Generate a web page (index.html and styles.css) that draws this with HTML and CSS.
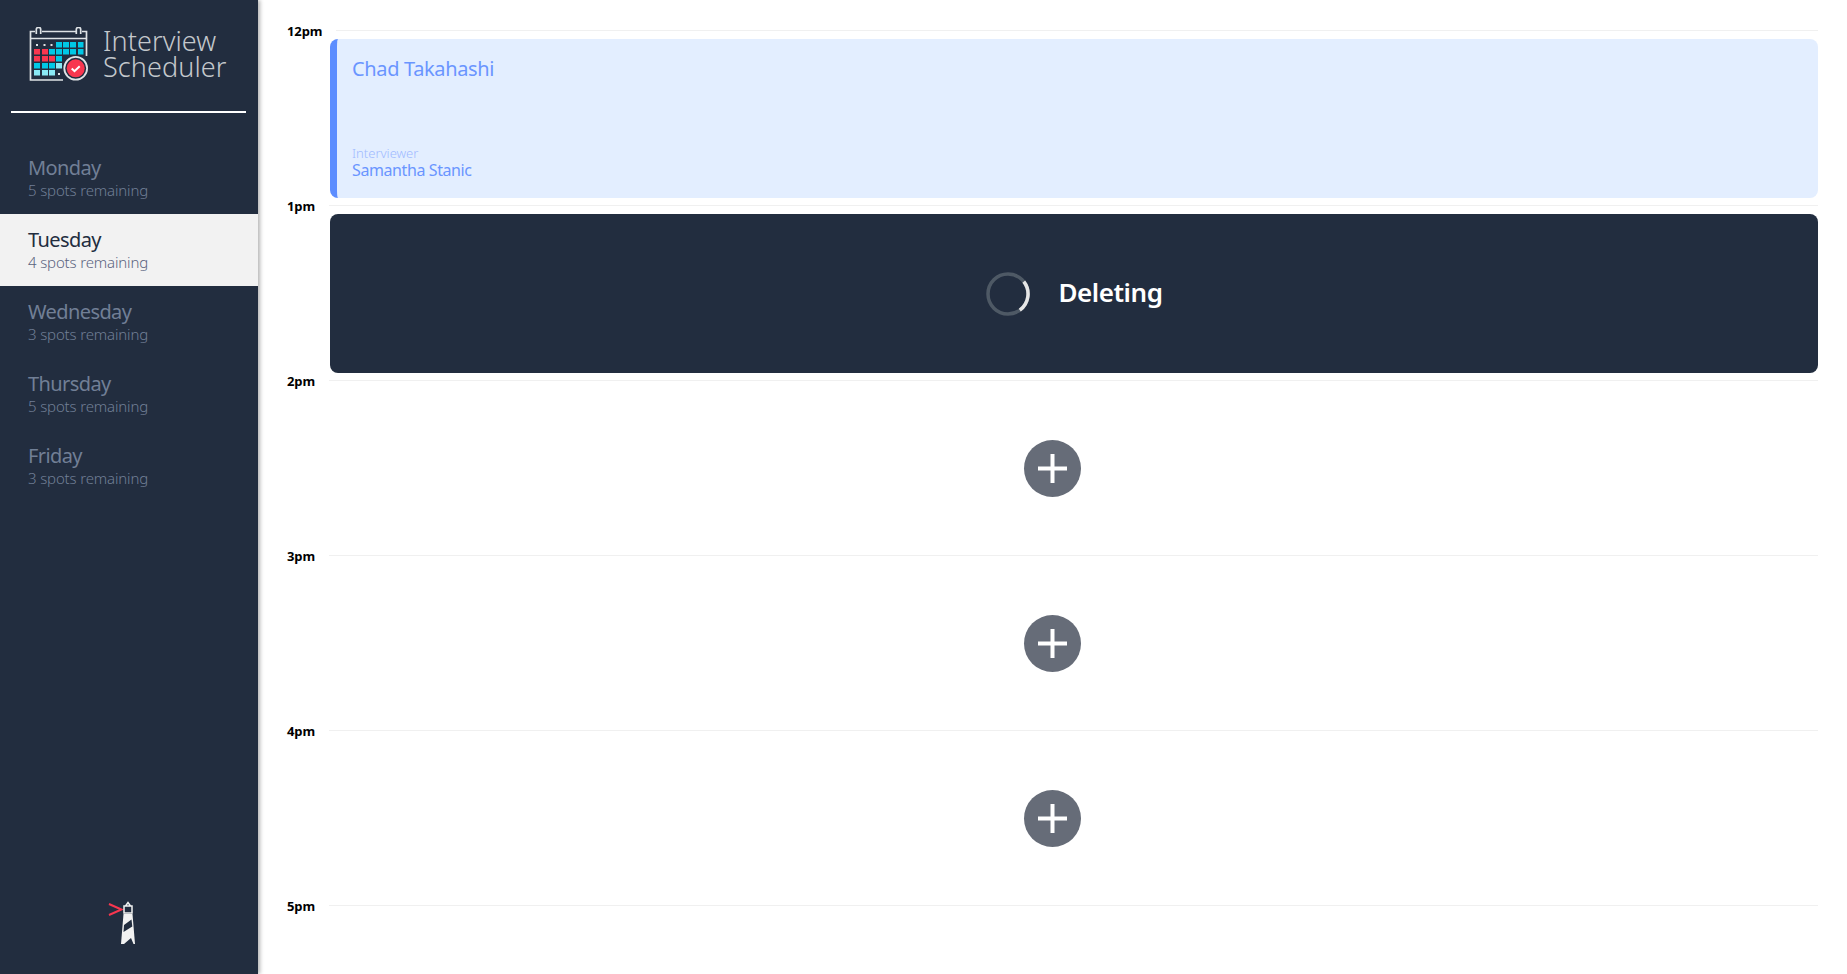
FILE: index.html
```html
<html lang="en">

<head>
    <meta charset="UTF-8">
    <meta name="viewport" content="width=device-width, initial-scale=1.0">
    <title>Interview Scheduler</title>
    <link rel="stylesheet" href="styles.css">
</head>

<body>
    <nav class="sidebar">
        <div class="brand">
            <svg class="brand-logo" viewBox="0 0 60 56" width="60" height="56">
                <g fill="none" stroke="#dfe3e6" stroke-width="1.700">
                    <path d="M7 4.500H2.500V53H35" />
                    <path d="M14 4.500H48" />
                    <path d="M54 4.500H58.500V29" />
                    <path d="M2.500 11.500H58.500" />
                    <path d="M8.300 7V2.500a2.200 2.200 0 0 1 4.400 0V7" />
                    <path d="M48.300 7V2.500a2.200 2.200 0 0 1 4.400 0V7" />
                </g>
                <g fill="#dfe3e6">
                    <rect x="8" y="17" width="2" height="2" />
                    <rect x="15.500" y="17" width="2" height="2" />
                    <rect x="22.500" y="17" width="2" height="2" />
                    <rect x="30" y="46" width="2" height="2" />
                </g>
                <g fill="#00c8e6">
                    <rect x="28" y="15" width="6" height="5.500" />
                    <rect x="35" y="15" width="6" height="5.500" />
                    <rect x="42" y="15" width="6" height="5.500" />
                    <rect x="50" y="15" width="5.500" height="5.500" />
                    <rect x="21" y="22" width="6" height="5.500" />
                    <rect x="28" y="22" width="6" height="5.500" />
                    <rect x="35" y="22" width="6" height="5.500" />
                    <rect x="42" y="22" width="6" height="5.500" />
                    <rect x="50" y="22" width="5.500" height="5.500" />
                    <rect x="28" y="29" width="6" height="5.500" />
                    <rect x="6" y="36" width="6" height="5.500" />
                    <rect x="14" y="36" width="6" height="5.500" />
                    <rect x="21" y="36" width="6" height="5.500" />
                </g>
                <g fill="#f8364f">
                    <rect x="6" y="22" width="6" height="5.500" />
                    <rect x="14" y="22" width="6" height="5.500" />
                    <rect x="6" y="29" width="6" height="5.500" />
                    <rect x="14" y="29" width="6" height="5.500" />
                    <rect x="21" y="29" width="6" height="5.500" />
                </g>
                <g fill="#8ae9f5">
                    <rect x="28" y="36" width="6" height="5.500" />
                    <rect x="6" y="43" width="6" height="5.500" />
                    <rect x="14" y="43" width="6" height="5.500" />
                    <rect x="21" y="43" width="6" height="5.500" />
                </g>
                <circle cx="47.700" cy="41.300" r="11.400" fill="#222d3f" stroke="#dfe3e6" stroke-width="1.800" />
                <circle cx="47.700" cy="41.300" r="9" fill="#f8364f" />
                <path d="M43.700 41.500l2.800 2.700 5.200-5" fill="none" stroke="#fff" stroke-width="2" />
            </svg>
            <h1 class="brand-name">Interview Scheduler</h1>
        </div>
        <hr class="sidebar-rule">
        <ul class="day-list">
            <li class="day">
                <h2 class="day-name">Monday</h2>
                <p class="day-spots">5 spots remaining</p>
            </li>
            <li class="day day-selected">
                <h2 class="day-name">Tuesday</h2>
                <p class="day-spots">4 spots remaining</p>
            </li>
            <li class="day">
                <h2 class="day-name">Wednesday</h2>
                <p class="day-spots">3 spots remaining</p>
            </li>
            <li class="day">
                <h2 class="day-name">Thursday</h2>
                <p class="day-spots">5 spots remaining</p>
            </li>
            <li class="day">
                <h2 class="day-name">Friday</h2>
                <p class="day-spots">3 spots remaining</p>
            </li>
        </ul>
        <svg class="lighthouse" viewBox="0 0 30 44" width="30" height="44">
            <path d="M1 3L13.500 8.500L1 14" fill="none" stroke="#f8364f" stroke-width="2" />
            <path d="M16 5H24V12H16ZM17.500 5L20 1.500L22.500 5" fill="none" stroke="#f2f2f2" stroke-width="1.500" />
            <path d="M15.500 13H24.500L27 43H13Z" fill="#f2f2f2" />
            <path d="M16 24L23.500 18.500L24.300 25.500L15.500 31ZM16 43L23 37L25.500 43Z" fill="#222d3f" />
        </svg>
    </nav>

    <main class="schedule">
        <article class="slot">
            <header class="slot-time">
                <h4 class="slot-label">12pm</h4>
                <hr class="slot-rule">
            </header>
            <section class="card card-show">
                <h2 class="student">Chad Takahashi</h2>
                <div>
                    <h4 class="interviewer-label">Interviewer</h4>
                    <h3 class="interviewer-name">Samantha Stanic</h3>
                </div>
            </section>
        </article>

        <article class="slot">
            <header class="slot-time">
                <h4 class="slot-label">1pm</h4>
                <hr class="slot-rule">
            </header>
            <section class="card card-status">
                <svg class="spinner" viewBox="0 0 44 44" width="44" height="44">
                    <circle cx="22" cy="22" r="20" fill="none" stroke="#4e5965" stroke-width="3.500" />
                    <path d="M37.800 9.700A20 20 0 0 1 33.800 38.200" fill="none" stroke="#e6e6e6" stroke-width="3.500" />
                </svg>
                <h1 class="status-text">Deleting</h1>
            </section>
        </article>

        <article class="slot">
            <header class="slot-time">
                <h4 class="slot-label">2pm</h4>
                <hr class="slot-rule">
            </header>
            <section class="add">
                <svg viewBox="0 0 58 58" width="58" height="58">
                    <circle cx="29.500" cy="29.500" r="28.500" fill="#666c78" />
                    <path d="M15 29.500H44M29.500 15V44" stroke="#fff" stroke-width="4" />
                </svg>
            </section>
        </article>

        <article class="slot">
            <header class="slot-time">
                <h4 class="slot-label">3pm</h4>
                <hr class="slot-rule">
            </header>
            <section class="add">
                <svg viewBox="0 0 58 58" width="58" height="58">
                    <circle cx="29.500" cy="29.500" r="28.500" fill="#666c78" />
                    <path d="M15 29.500H44M29.500 15V44" stroke="#fff" stroke-width="4" />
                </svg>
            </section>
        </article>

        <article class="slot">
            <header class="slot-time">
                <h4 class="slot-label">4pm</h4>
                <hr class="slot-rule">
            </header>
            <section class="add">
                <svg viewBox="0 0 58 58" width="58" height="58">
                    <circle cx="29.500" cy="29.500" r="28.500" fill="#666c78" />
                    <path d="M15 29.500H44M29.500 15V44" stroke="#fff" stroke-width="4" />
                </svg>
            </section>
        </article>

        <article class="slot slot-last">
            <header class="slot-time">
                <h4 class="slot-label">5pm</h4>
                <hr class="slot-rule">
            </header>
        </article>
    </main>
</body>

</html>
```

FILE: styles.css
```css
* {
    box-sizing: border-box;
}

body {
    display: flex;
    height: 974px;
    margin: 0;
    overflow: hidden;
    background-color: white;
    font-family: "Noto Sans", sans-serif;
}

h1,
h2,
h3,
h4,
p,
ul {
    margin: 0;
    padding: 0;
}

.sidebar {
    display: flex;
    flex-direction: column;
    flex: 0 0 258px;
    background-color: #222d3f;
    box-shadow: 2px 0 4px rgba(0, 0, 0, 0.3);
    position: relative;
}

.brand {
    display: flex;
    align-items: center;
    gap: 15px;
    height: 111px;
    padding: 0 0 1px 28px;
}

.brand-name {
    width: 142px;
    margin-bottom: 3px;
    color: #c4c8cc;
    font-size: 27px;
    font-weight: 300;
    line-height: 26px;
    letter-spacing: 0.1px;
}

.sidebar-rule {
    height: 2px;
    margin: 0 12px 0 11px;
    border: none;
    background-color: white;
}

.day-list {
    margin-top: 29px;
    list-style: none;
}

.day {
    height: 72px;
    padding: 12px 0 0 28px;
    color: #717f96;
}

.day-selected {
    background-color: #f2f2f2;
    color: #222d3f;
}

.day-name {
    font-size: 20px;
    font-weight: 400;
    line-height: 28px;
    letter-spacing: -0.6px;
}

.day-spots {
    margin-top: -1px;
    font-size: 15px;
    font-weight: 300;
    line-height: 18px;
    letter-spacing: -0.15px;
}

.day-selected .day-spots {
    color: #5b6480;
}

.lighthouse {
    margin: auto 0 29px 108px;
}

.schedule {
    flex: 1;
    padding-top: 22px;
}

.slot {
    height: 175px;
}

.slot-last {
    height: 16px;
}

.slot-time {
    display: flex;
    align-items: center;
    height: 16px;
}

.slot-label {
    margin: 2px 14px 0 29px;
    color: black;
    font-size: 13px;
    font-weight: 700;
    line-height: 16px;
    letter-spacing: -0.1px;
}

.slot-rule {
    flex: 1;
    margin: 0 29px 0 0;
    border: none;
    border-top: 1px solid #f0f0f0;
}

.card {
    height: 159px;
    margin: 1px 29px 0 72px;
    border-radius: 8px;
}

.card-show {
    display: flex;
    flex-direction: column;
    justify-content: space-between;
    padding: 15px 16px 18px 15px;
    border-left: 7px solid #5c8dff;
    background-color: #e3eeff;
    color: #6a95ff;
}

.student {
    font-size: 20px;
    font-weight: 400;
    line-height: 30px;
    letter-spacing: -0.35px;
}

.interviewer-label {
    color: #9fbaff;
    font-size: 13px;
    font-weight: 300;
    line-height: 15px;
}

.interviewer-name {
    font-size: 16px;
    font-weight: 400;
    line-height: 19px;
    letter-spacing: -0.4px;
}

.card-status {
    display: flex;
    align-items: center;
    justify-content: center;
    gap: 29px;
    background-color: #222d3f;
}

.status-text {
    padding-bottom: 3px;
    color: white;
    font-size: 26px;
    font-weight: 600;
    letter-spacing: -0.45px;
}

.add {
    display: flex;
    align-items: center;
    justify-content: center;
    height: 158px;
    margin-top: 1px;
    padding-right: 1px;
}
```
